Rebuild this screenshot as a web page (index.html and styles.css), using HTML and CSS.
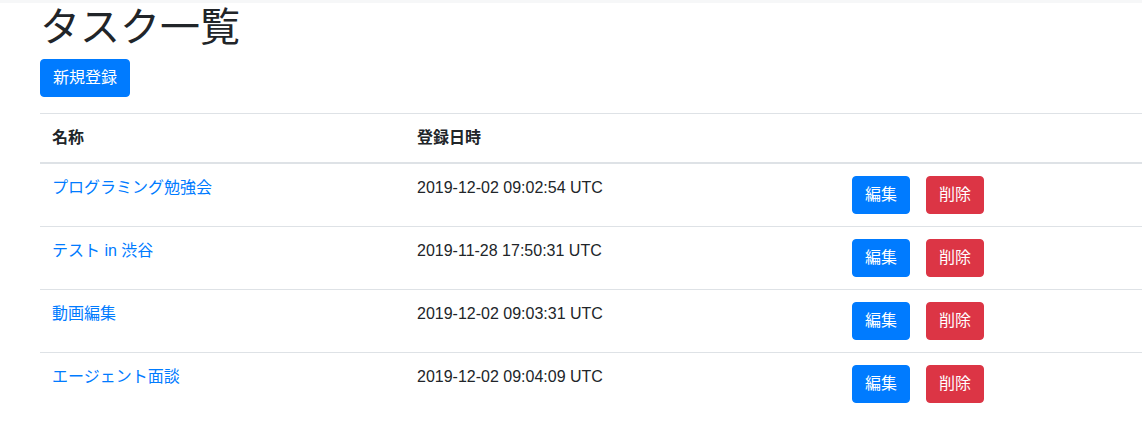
FILE: index.html
```html
<!DOCTYPE html>
<html lang="ja">
<head>
<meta charset="utf-8">
<title>タスク一覧</title>
<link rel="stylesheet" href="styles.css">
</head>
<body>
<div class="topbar"></div>
<main class="page">
  <h1 class="title">タスク一覧</h1>
  <a class="btn btn-primary" href="#">新規登録</a>
  <table class="table">
    <colgroup>
      <col class="col-name">
      <col class="col-date">
      <col class="col-actions">
    </colgroup>
    <thead>
      <tr><th>名称</th><th>登録日時</th><th></th></tr>
    </thead>
    <tbody>
      <tr>
        <td><a class="link" href="#">プログラミング勉強会</a></td>
        <td>2019-12-02 09:02:54 UTC</td>
        <td><div class="actions"><a class="btn btn-primary" href="#">編集</a><a class="btn btn-danger" href="#">削除</a></div></td>
      </tr>
      <tr>
        <td><a class="link" href="#">テスト in 渋谷</a></td>
        <td>2019-11-28 17:50:31 UTC</td>
        <td><div class="actions"><a class="btn btn-primary" href="#">編集</a><a class="btn btn-danger" href="#">削除</a></div></td>
      </tr>
      <tr>
        <td><a class="link" href="#">動画編集</a></td>
        <td>2019-12-02 09:03:31 UTC</td>
        <td><div class="actions"><a class="btn btn-primary" href="#">編集</a><a class="btn btn-danger" href="#">削除</a></div></td>
      </tr>
      <tr>
        <td><a class="link" href="#">エージェント面談</a></td>
        <td>2019-12-02 09:04:09 UTC</td>
        <td><div class="actions"><a class="btn btn-primary" href="#">編集</a><a class="btn btn-danger" href="#">削除</a></div></td>
      </tr>
    </tbody>
  </table>
</main>
</body>
</html>
```
FILE: styles.css
```css
html, body {
  margin: 0;
  padding: 0;
  background: #fff;
}
body {
  font-family: "Liberation Sans", "Noto Sans CJK JP", sans-serif;
  font-size: 16px;
  line-height: 24px;
  color: #212529;
}
.topbar {
  height: 3px;
  background: #f6f7f8;
}
.page {
  padding: 0 0 0 40px;
}
.title {
  margin: 0 0 8px 0;
  font-size: 40px;
  line-height: 48px;
  font-weight: 400;
}
.btn {
  display: inline-block;
  padding: 6px 12px;
  border: 1px solid transparent;
  border-radius: 4px;
  color: #fff;
  text-decoration: none;
  font-size: 16px;
  line-height: 24px;
  font-weight: 400;
}
.btn-primary {
  background: #007bff;
  border-color: #007bff;
}
.btn-danger {
  background: #dc3545;
  border-color: #dc3545;
}
.table {
  margin-top: 16px;
  width: 100%;
  border-collapse: collapse;
  table-layout: fixed;
}
.col-name { width: 365px; }
.col-date { width: 435px; }
.table th,
.table td {
  padding: 12px;
  text-align: left;
  vertical-align: top;
  border-top: 1px solid #dee2e6;
}
.table th {
  font-weight: 700;
  border-bottom: 2px solid #dee2e6;
}
.link {
  color: #007bff;
  text-decoration: none;
}
.actions {
  display: flex;
  gap: 16px;
}
```
